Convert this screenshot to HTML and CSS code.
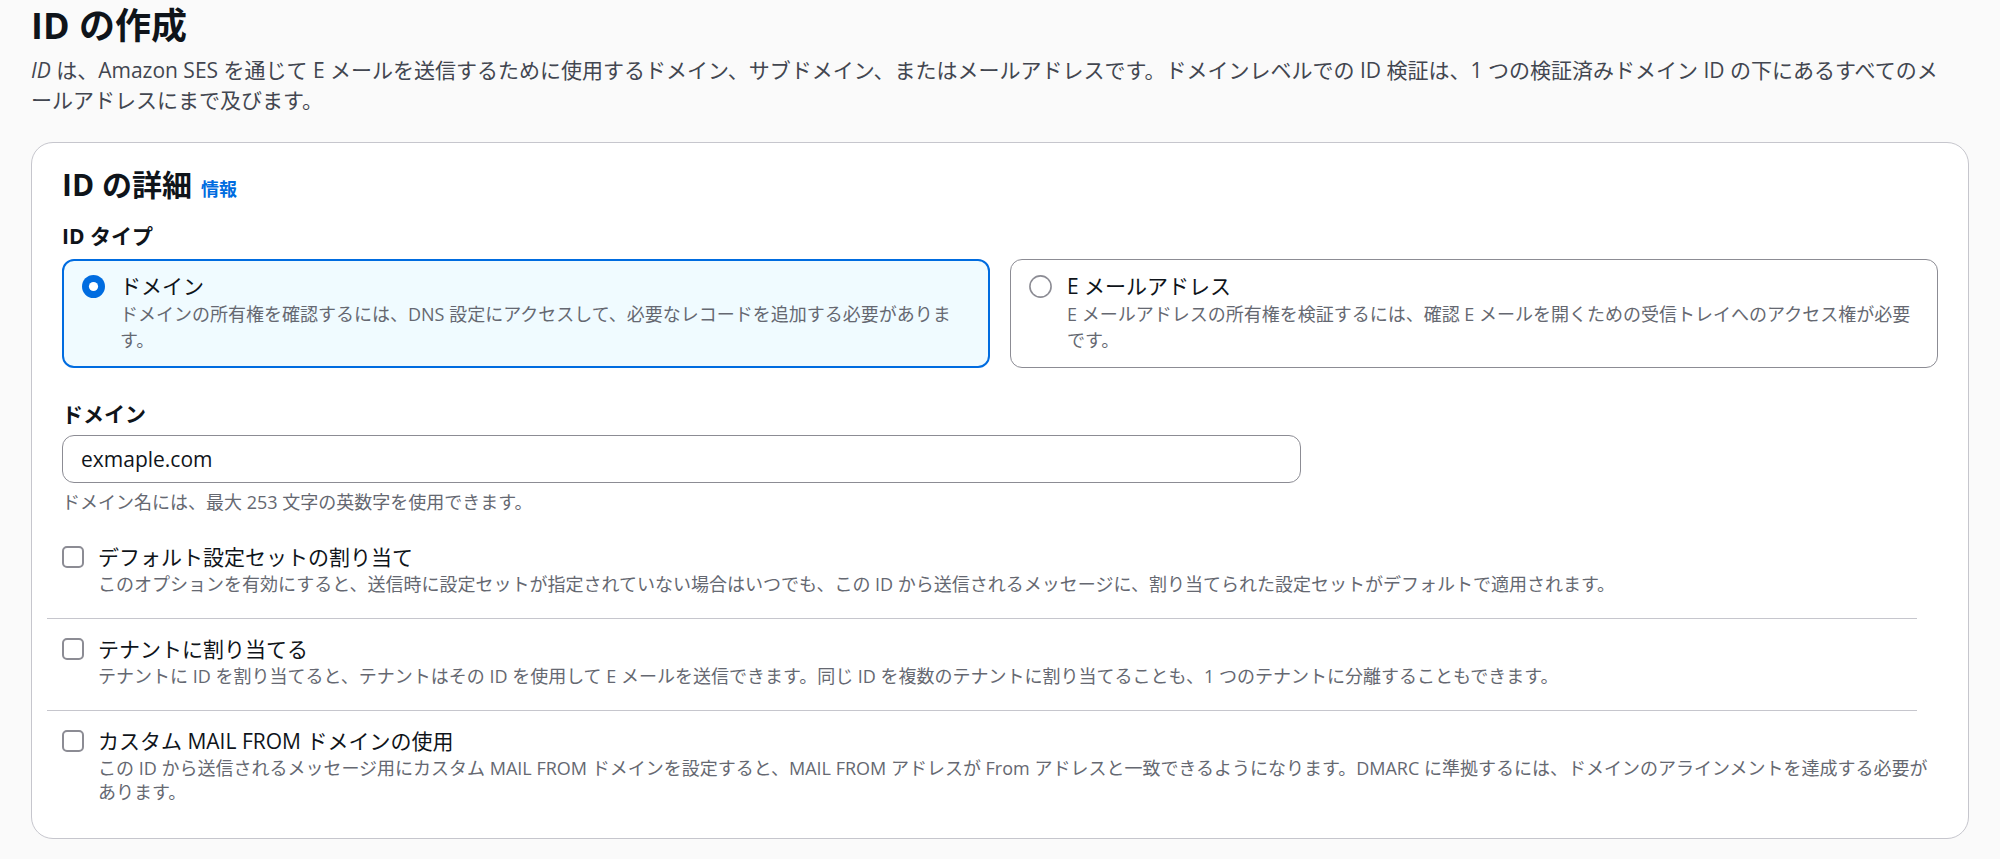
FILE: index.html
```html
<!DOCTYPE html>
<html lang="ja">
<head>
<meta charset="utf-8">
<title>ID の作成</title>
<link rel="stylesheet" href="styles.css">
</head>
<body>
<main class="page">
  <header class="page-header">
    <h1 class="page-title">ID の作成</h1>
    <p class="page-desc"><i>ID</i> は、Amazon SES を通じて E メールを送信するために使用するドメイン、サブドメイン、またはメールアドレスです。ドメインレベルでの ID 検証は、1 つの検証済みドメイン ID の下にあるすべてのメールアドレスにまで及びます。</p>
  </header>

  <section class="panel">
    <div class="panel-header">
      <h2 class="panel-title">ID の詳細</h2>
      <a class="info-link" href="#">情報</a>
    </div>

    <div class="field">
      <div class="field-label">ID タイプ</div>
      <div class="tiles">
        <label class="tile tile-selected">
          <svg class="radio" width="23" height="23" viewBox="0 0 23 23" aria-hidden="true">
            <circle cx="11.5" cy="11.5" r="11.5" fill="#006ce0"/>
            <circle cx="11.5" cy="11.5" r="4.6" fill="#ffffff"/>
          </svg>
          <span class="choice-text">
            <span class="choice-label">ドメイン</span>
            <span class="choice-desc">ドメインの所有権を確認するには、DNS 設定にアクセスして、必要なレコードを追加する必要があります。</span>
          </span>
        </label>
        <label class="tile">
          <svg class="radio" width="23" height="23" viewBox="0 0 23 23" aria-hidden="true">
            <circle cx="11.5" cy="11.5" r="10.6" fill="#ffffff" stroke="#8c8c94" stroke-width="1.6"/>
          </svg>
          <span class="choice-text">
            <span class="choice-label">E メールアドレス</span>
            <span class="choice-desc">E メールアドレスの所有権を検証するには、確認 E メールを開くための受信トレイへのアクセス権が必要です。</span>
          </span>
        </label>
      </div>
    </div>

    <div class="field field-domain">
      <div class="field-label">ドメイン</div>
      <div class="input">exmaple.com</div>
      <div class="field-hint">ドメイン名には、最大 253 文字の英数字を使用できます。</div>
    </div>

    <div class="options">
      <div class="option">
        <span class="checkbox"></span>
        <span class="choice-text">
          <span class="choice-label">デフォルト設定セットの割り当て</span>
          <span class="option-desc">このオプションを有効にすると、送信時に設定セットが指定されていない場合はいつでも、この ID から送信されるメッセージに、割り当てられた設定セットがデフォルトで適用されます。</span>
        </span>
      </div>
      <div class="divider"></div>
      <div class="option">
        <span class="checkbox"></span>
        <span class="choice-text">
          <span class="choice-label">テナントに割り当てる</span>
          <span class="option-desc">テナントに ID を割り当てると、テナントはその ID を使用して E メールを送信できます。同じ ID を複数のテナントに割り当てることも、1 つのテナントに分離することもできます。</span>
        </span>
      </div>
      <div class="divider"></div>
      <div class="option">
        <span class="checkbox"></span>
        <span class="choice-text">
          <span class="choice-label">カスタム MAIL FROM ドメインの使用</span>
          <span class="option-desc">この ID から送信されるメッセージ用にカスタム MAIL FROM ドメインを設定すると、MAIL FROM アドレスが From アドレスと一致できるようになります。DMARC に準拠するには、ドメインのアラインメントを達成する必要があります。</span>
        </span>
      </div>
    </div>
  </section>
</main>
</body>
</html>
```

FILE: styles.css
```css
* {
  box-sizing: border-box;
}

html,
body {
  margin: 0;
  background: #fafafa;
}

body {
  font-family: "Open Sans", "Noto Sans CJK JP", sans-serif;
  color: #0f141a;
  font-size: 21px;
  line-height: 30px;
}

.page {
  padding: 3px 31px 20px;
}

/* page heading */
.page-title {
  margin: 0;
  font-size: 36px;
  line-height: 45px;
  font-weight: 700;
}

.page-desc {
  margin: 7px 0 0;
  max-width: 1920px;
  font-size: 21px;
  line-height: 30px;
  color: #424650;
}

.page-desc i {
  font-style: italic;
}

/* white panel */
.panel {
  margin-top: 27px;
  background: #ffffff;
  border: 1px solid #c6c6cd;
  border-radius: 22px;
  padding: 24px 30px 12px;
}

.panel-header {
  display: flex;
  align-items: baseline;
  gap: 9px;
}

.panel-title {
  margin: 0;
  font-size: 30px;
  line-height: 36px;
  font-weight: 700;
}

.info-link {
  font-size: 18px;
  font-weight: 700;
  color: #006ce0;
  text-decoration: none;
}

.field {
  margin-top: 17px;
}

.field-label {
  font-weight: 700;
  font-size: 21px;
  line-height: 30px;
}

/* radio tiles */
.tiles {
  margin-top: 8px;
  display: grid;
  grid-template-columns: 1fr 1fr;
  gap: 20px;
}

.tile {
  display: flex;
  align-items: flex-start;
  gap: 15px;
  border: 1px solid #8c8c94;
  border-radius: 12px;
  padding: 11px 18px 14px 18px;
  background: #ffffff;
}

.tile-selected {
  border: 2px solid #006ce0;
  background: #f0fbff;
  padding: 10px 18px 13px 18px;
}

.radio {
  flex: none;
  margin-top: 4px;
}

.choice-text {
  display: flex;
  flex-direction: column;
  min-width: 0;
}

.choice-label {
  font-size: 21px;
  line-height: 30px;
}

.choice-desc {
  font-size: 18px;
  line-height: 26px;
  color: #656871;
}

/* domain field */
.field-domain {
  margin-top: 31px;
}

.input {
  margin-top: 6px;
  width: 1239px;
  height: 48px;
  border: 1px solid #8c8c94;
  border-radius: 12px;
  padding: 8px 18px;
  font-size: 21px;
  line-height: 30px;
  background: #ffffff;
}

.field-hint {
  margin-top: 7px;
  font-size: 18px;
  line-height: 24px;
  color: #656871;
}

/* checkbox options */
.options {
  margin: 13px -15px 0;
}

.option {
  display: flex;
  align-items: flex-start;
  gap: 14px;
  padding: 15px 15px 22px;
}

.divider {
  height: 1px;
  margin-right: 36px;
  background: #c6c6cd;
}

.checkbox {
  flex: none;
  width: 22px;
  height: 22px;
  margin-top: 4px;
  border: 2px solid #8c8c94;
  border-radius: 5px;
  background: #ffffff;
}

.option-desc {
  font-size: 18px;
  line-height: 24px;
  color: #656871;
}
```
